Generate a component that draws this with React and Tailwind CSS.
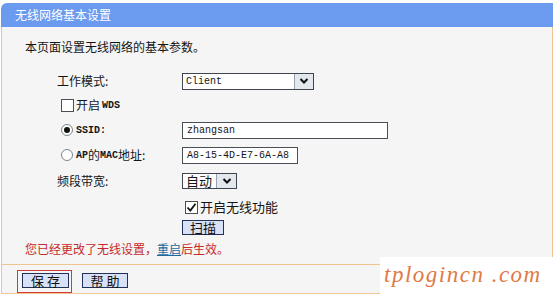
import React from 'react';

// small chevron used by the fake <select> boxes
function Chevron() {
  return (
    <svg width="10" height="8" viewBox="0 0 10 8">
      <path d="M1.5 2 L5 5.5 L8.5 2" fill="none" stroke="#111" strokeWidth="2" />
    </svg>
  );
}

function Select({ value, w, h, arrowW, mono }) {
  return (
    <div className={`flex border border-[#3f4650] bg-white ${w} ${h}`}>
      <span
        className={`flex-1 pl-[3px] flex items-center whitespace-nowrap ${
          mono ? "font-['Liberation_Mono',monospace] text-[10px]" : 'text-[13px]'
        }`}
      >
        {value}
      </span>
      <span className={`${arrowW} border-l border-[#9aa3ad] bg-[#e3e8ee] flex items-center justify-center`}>
        <Chevron />
      </span>
    </div>
  );
}

function Input({ value, w }) {
  return (
    <div
      className={`h-[17px] ${w} border border-[#4a4f57] bg-white pl-[4px] flex items-center whitespace-nowrap overflow-hidden font-['Liberation_Mono',monospace] text-[10px]`}
    >
      {value}
    </div>
  );
}

function Radio({ checked }) {
  return (
    <span className="w-[12px] h-[12px] rounded-full border border-[#7d848c] bg-white flex items-center justify-center">
      {checked && <span className="w-[6px] h-[6px] rounded-full bg-[#111]" />}
    </span>
  );
}

function Check({ checked }) {
  return (
    <span className="w-[13px] h-[13px] border border-[#4b4f55] bg-white flex items-center justify-center">
      {checked && (
        <svg width="11" height="11" viewBox="0 0 11 11">
          <path d="M1.5 5.5 L4.3 8.5 L9.5 1.8" fill="none" stroke="#111" strokeWidth="1.8" />
        </svg>
      )}
    </span>
  );
}

function Row({ h, label, children }) {
  return (
    <div className={`flex items-center ${h}`}>
      <div className="w-[125px] flex items-center">{label}</div>
      <div className="flex items-center">{children}</div>
    </div>
  );
}

function Btn({ children, w }) {
  return (
    <button className={`${w} h-[15px] border border-[#22305a] bg-[#d9e1f7] text-[13px] leading-[13px] text-[#111] flex items-center justify-center`}>
      {children}
    </button>
  );
}

const latin = "font-['Liberation_Mono',monospace] text-[10px] font-bold";

export default function App() {
  return (
    <div className="w-[556px] h-[297px] bg-white relative overflow-hidden font-['Noto_Sans_CJK_SC',sans-serif] text-[12px] text-[#151515]">
      <div className="ml-[1px] mt-[3px] w-[552px]">
        {/* title bar */}
        <div className="h-[24px] bg-[#6a9bef] rounded-tl-[6px] pl-[14px] leading-[24px] text-white">
          无线网络基本设置
        </div>

        <div className="border-x border-[#f0c48e] bg-[#f5f5f5] pl-[23px] pt-[12px] pb-[8px]">
          <div className="h-[16px] leading-[16px]">本页面设置无线网络的基本参数。</div>

          <div className="mt-[15px] pl-[32px]">
            <Row h="h-[22px]" label="工作模式:">
              <Select value="Client" w="w-[132px]" h="h-[17px]" arrowW="w-[19px]" mono />
            </Row>
            <div className="h-[26px] flex items-center pl-[4px] gap-[2px]">
              <Check />
              <span>开启</span>
              <span className={latin}>WDS</span>
            </div>
            <Row
              h="h-[24px]"
              label={
                <span className="flex items-center pl-[4px] gap-[3px]">
                  <Radio checked />
                  <span className={latin}>SSID:</span>
                </span>
              }
            >
              <Input value="zhangsan" w="w-[206px]" />
            </Row>
            <Row
              h="h-[26px]"
              label={
                <span className="flex items-center pl-[4px] gap-[3px]">
                  <Radio />
                  <span className="flex items-center">
                    <span className={latin}>AP</span>
                    <span>的</span>
                    <span className={latin}>MAC</span>
                    <span>地址:</span>
                  </span>
                </span>
              }
            >
              <Input value="A8-15-4D-E7-6A-A8" w="w-[116px]" />
            </Row>
            <Row h="h-[26px]" label="频段带宽:">
              <Select value="自动" w="w-[55px]" h="h-[16px]" arrowW="w-[20px]" />
            </Row>
            <Row h="h-[26px]" label="">
              <span className="flex items-center pl-[3px] gap-[2px] text-[13px]">
                <Check checked />
                开启无线功能
              </span>
            </Row>
            <Row h="h-[14px]" label="">
              <Btn w="w-[42px]">扫描</Btn>
            </Row>
          </div>

          <div className="mt-[8px] h-[14px] leading-[14px] text-[#c62a2a]">
            您已经更改了无线设置，<span className="text-[#1d6aa0] underline">重启</span>后生效。
          </div>
        </div>

        {/* footer */}
        <div className="border border-[#f0c48e] bg-[#f5f5f5] pt-[5px] pl-[15px] flex items-start">
          <div className="border border-[#d23a3a] pt-[2px] pl-[4px] pr-[2px] pb-[4px]">
            <Btn w="w-[47px]">保 存</Btn>
          </div>
          <div className="ml-[10px] pt-[3px]">
            <Btn w="w-[46px]">帮 助</Btn>
          </div>
        </div>
      </div>

      {/* watermark */}
      <div className="absolute right-0 bottom-0 w-[176px] h-[40px] bg-white pl-[4px] pt-[4px] font-['Liberation_Serif',serif] italic text-[23px] leading-[28px] tracking-[1.5px] text-[#df7a45]">
        tplogincn .com
      </div>
    </div>
  );
}
